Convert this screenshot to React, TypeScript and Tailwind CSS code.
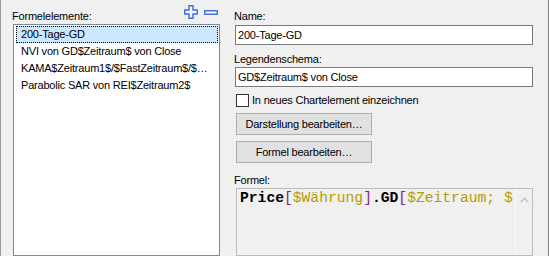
import React from 'react';

const items = [
  '200-Tage-GD',
  'NVI von GD$Zeitraum$ von Close',
  'KAMA$Zeitraum1$/$FastZeitraum$/$…',
  'Parabolic SAR von REI$Zeitraum2$',
];

const PlusIcon = () => (
  <svg width="14" height="14" viewBox="0 0 14 14">
    <polygon
      points="5,0.75 9,0.75 9,5 13.25,5 13.25,9 9,9 9,13.25 5,13.25 5,9 0.75,9 0.75,5 5,5"
      fill="#f4f6fb"
      stroke="#3b6fd4"
      strokeWidth="1.4"
    />
  </svg>
);

const MinusIcon = () => (
  <svg width="14" height="5" viewBox="0 0 14 5">
    <rect x="0.75" y="0.75" width="12.5" height="3.5" fill="#f4f6fb" stroke="#3b6fd4" strokeWidth="1.4" />
  </svg>
);

const Label: React.FC<{ text: string; className?: string }> = ({ text, className }) => (
  <div className={`leading-[13px] ${className ?? ''}`}>{text}</div>
);

export default function App() {
  return (
    <div className="flex w-[549px] h-[256px] overflow-hidden bg-[#f0f0f0] text-black font-['Liberation_Sans',Arial,sans-serif] text-[11px] tracking-[-0.2px]">
      {/* left: formula elements */}
      <div className="w-[221px] shrink-0 border-l border-[#9c9c9c] pl-[11px] flex flex-col">
        <div className="h-[25px] flex items-start">
          <Label text="Formelelemente:" className="pt-[10px]" />
          <div className="ml-auto mr-[3px] flex items-center gap-[6px] pt-[5px]">
            <PlusIcon />
            <MinusIcon />
          </div>
        </div>
        <div className="ml-px w-[207px] h-[240px] border border-[#828790] bg-white p-[1px] pl-[2px]">
          {items.map((item, i) => (
            <div
              key={item}
              className={
                i === 0
                  ? 'h-[17px] flex items-center pl-[4px] bg-[#cce8ff] border border-dotted border-black whitespace-nowrap overflow-hidden'
                  : 'h-[17px] flex items-center pl-[5px] whitespace-nowrap overflow-hidden'
              }
            >
              {item}
            </div>
          ))}
        </div>
      </div>

      {/* right: element details */}
      <div className="flex-1 border-r border-[#7f7f7f] pl-[13px] flex flex-col">
        <div className="h-[25px] pt-[10px]">
          <Label text="Name:" />
        </div>
        <div className="ml-px w-[298px] h-[20px] border border-[#7a7a7a] bg-white pl-[2px] flex items-center">
          200-Tage-GD
        </div>
        <div className="h-[22px] pt-[8px]">
          <Label text="Legendenschema:" />
        </div>
        <div className="ml-px w-[298px] h-[20px] border border-[#7a7a7a] bg-white pl-[2px] flex items-center">
          GD$Zeitraum$ von Close
        </div>
        <div className="mt-[7px] ml-[2px] h-[13px] flex items-center gap-[3px]">
          <div className="w-[13px] h-[13px] border border-[#333333] bg-white" />
          <span>In neues Chartelement einzeichnen</span>
        </div>
        <button className="mt-[6px] ml-[2px] w-[136px] h-[22px] border border-[#adadad] bg-[#e1e1e1] flex items-center justify-center">
          Darstellung bearbeiten…
        </button>
        <button className="mt-[6px] ml-[2px] w-[136px] h-[22px] border border-[#adadad] bg-[#e1e1e1] flex items-center justify-center">
          Formel bearbeiten…
        </button>
        <div className="h-[25px] pt-[11px]">
          <Label text="Formel:" />
        </div>
        <div className="ml-[2px] w-[297px] flex-1 border border-[#bcbcbc] flex">
          <div className="flex-1 overflow-hidden whitespace-nowrap pl-[3px] pt-[1px] font-['Liberation_Mono','Courier_New',monospace] text-[14.67px] leading-[17px] tracking-normal">
            <span className="font-bold">Price</span>
            <span className="text-[#7d2a7d]">[</span>
            <span className="text-[#b59d00]">$Währung</span>
            <span className="text-[#7d2a7d]">]</span>
            <span className="font-bold">.GD</span>
            <span className="text-[#7d2a7d]">[</span>
            <span className="text-[#b59d00]">$Zeitraum; $</span>
          </div>
          <div className="w-[17px] border-l border-[#fbfbfb] flex justify-center pt-[8px]">
            <svg width="9" height="6" viewBox="0 0 9 6">
              <polyline points="0.8,5.2 4.5,1.3 8.2,5.2" fill="none" stroke="#c2c2c2" strokeWidth="1.6" />
            </svg>
          </div>
        </div>
      </div>
    </div>
  );
}
